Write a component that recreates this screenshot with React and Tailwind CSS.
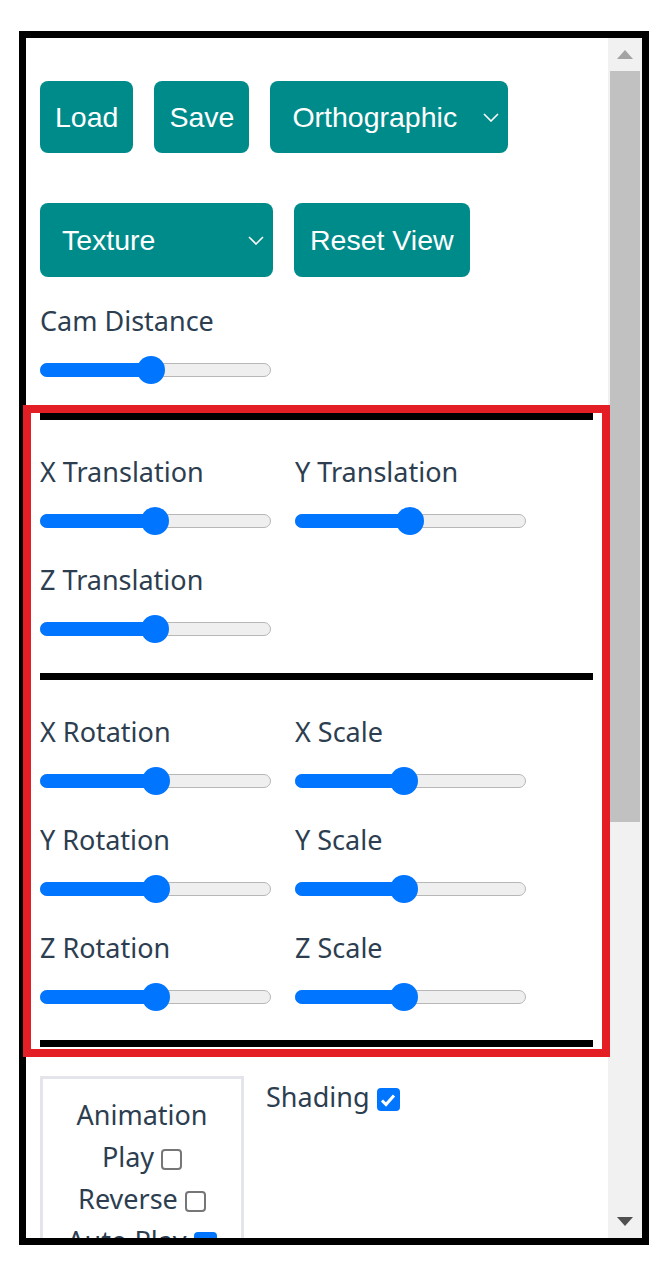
import React from 'react';

const label = 'text-[27px] leading-[40px] text-[#2c3e50]';

function Chevron() {
  return (
    <svg width="16" height="9" viewBox="0 0 16 9" className="flex-shrink-0">
      <polyline points="1,1 8,8 15,1" fill="none" stroke="white" strokeWidth="1.6" />
    </svg>
  );
}

function Slider({ pos }) {
  return (
    <div className="relative mt-[15px] h-[28px] w-[231px] flex items-center">
      <div className="h-[14px] w-full rounded-full bg-[#efefef] border border-[#b7b7b7]" />
      <div className="absolute left-0 top-[7px] h-[14px] rounded-full bg-[#0075ff]" style={{ width: pos }} />
      <div className="absolute top-0 h-[28px] w-[28px] rounded-full bg-[#0075ff]" style={{ left: pos - 14 }} />
    </div>
  );
}

function Control({ name, pos }) {
  return (
    <div className="pb-[25px]">
      <div className={label}>{name}</div>
      <Slider pos={pos} />
    </div>
  );
}

function Checkbox({ checked }) {
  if (checked) {
    return (
      <span className="inline-flex w-[23px] h-[23px] rounded-[4px] bg-[#0075ff] items-center justify-center align-middle">
        <svg width="16" height="14" viewBox="0 0 16 14">
          <polyline points="2,7.5 6,11.5 14,2.5" fill="none" stroke="white" strokeWidth="3" />
        </svg>
      </span>
    );
  }
  return <span className="inline-block w-[21px] h-[21px] rounded-[4px] border-2 border-[#767676] bg-white align-middle" />;
}

function Hr({ mt }) {
  return <div className={`h-[7px] bg-black ${mt}`} />;
}

export default function App() {
  return (
    <div className="relative w-[665px] h-[1274px] bg-white" style={{ fontFamily: '"Noto Sans", sans-serif' }}>
      <div className="ml-[19px] pt-[31px]">
        <div className="w-[630px] h-[1214px] border-[7px] border-black flex overflow-hidden">
          <div className="flex-1 overflow-hidden pl-[14px] pr-[15px] pt-[43px]">
            <div className="flex gap-[21px] text-white text-[28.5px]" style={{ fontFamily: '"Liberation Sans", Arial, sans-serif' }}>
              <button className="h-[72px] px-[15px] rounded-[8px] bg-[#008b8b]">Load</button>
              <button className="h-[72px] px-[15px] rounded-[8px] bg-[#008b8b]">Save</button>
              <div className="h-[72px] w-[238px] pl-[22px] pr-[9px] rounded-[8px] bg-[#008b8b] flex items-center justify-between">
                <span>Orthographic</span>
                <Chevron />
              </div>
            </div>
            <div className="flex gap-[21px] mt-[50px] text-white text-[28.5px]" style={{ fontFamily: '"Liberation Sans", Arial, sans-serif' }}>
              <div className="h-[74px] w-[233px] pl-[22px] pr-[9px] rounded-[8px] bg-[#008b8b] flex items-center justify-between">
                <span>Texture</span>
                <Chevron />
              </div>
              <button className="h-[74px] px-[16px] rounded-[8px] bg-[#008b8b]">Reset View</button>
            </div>

            <div className="mt-[24px]">
              <Control name="Cam Distance" pos={111} />
            </div>

            <Hr mt="mt-[4px]" />
            <div className="grid grid-cols-[255px_1fr] pt-[32px]">
              <Control name="X Translation" pos={115} />
              <Control name="Y Translation" pos={115} />
              <Control name="Z Translation" pos={115} />
            </div>
            <Hr mt="mt-[5px]" />
            <div className="grid grid-cols-[255px_1fr] pt-[32px]">
              <Control name="X Rotation" pos={116} />
              <Control name="X Scale" pos={109} />
              <Control name="Y Rotation" pos={116} />
              <Control name="Y Scale" pos={109} />
              <Control name="Z Rotation" pos={116} />
              <Control name="Z Scale" pos={109} />
            </div>
            <Hr mt="mt-[4px]" />

            <div className="flex items-start gap-[22px] mt-[29px] text-[27px] leading-[42px] text-[#2c3e50]">
              <div className="w-[204px] border-[3px] border-[#e4e5ea] pt-[15px] pb-[10px] text-center">
                <div>Animation</div>
                <div>Play <Checkbox /></div>
                <div>Reverse <Checkbox /></div>
                <div>Auto Play <Checkbox checked /></div>
              </div>
              <div>Shading <Checkbox checked /></div>
            </div>
          </div>

          <div className="w-[34px] bg-[#f1f1f1] flex flex-col">
            <div className="h-[33px] flex items-center justify-center">
              <svg width="16" height="9" viewBox="0 0 16 9"><polygon points="0,9 8,0 16,9" fill="#a3a3a3" /></svg>
            </div>
            <div className="mx-[2px] h-[751px] bg-[#c1c1c1]" />
            <div className="flex-1" />
            <div className="h-[33px] flex items-center justify-center">
              <svg width="16" height="9" viewBox="0 0 16 9"><polygon points="0,0 16,0 8,9" fill="#505050" /></svg>
            </div>
          </div>
        </div>
      </div>

      <div className="absolute left-[23px] top-[405px] w-[587px] h-[652px] border-8 border-[#e31e24] pointer-events-none" />
    </div>
  );
}
